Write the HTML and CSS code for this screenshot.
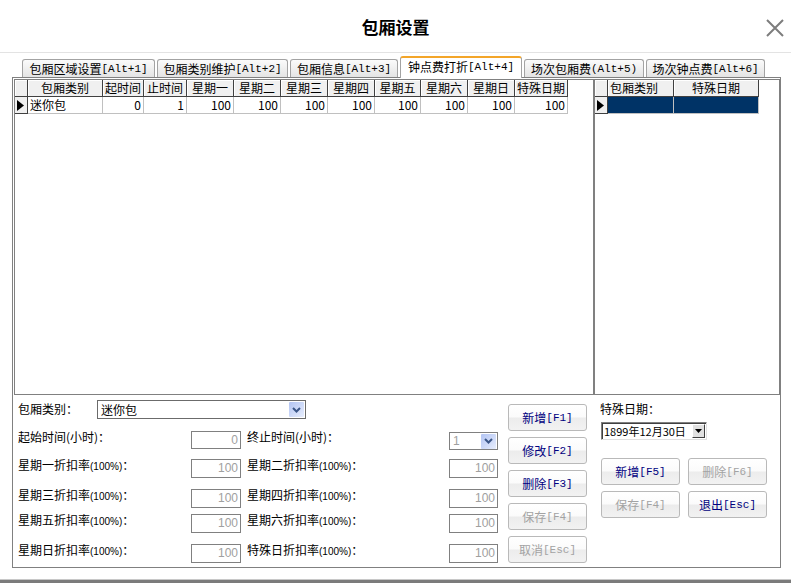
FILE: index.html
```html
<!DOCTYPE html>
<html lang="zh-CN">
<head>
<meta charset="utf-8">
<title>包厢设置</title>
<link rel="stylesheet" href="styles.css">
</head>
<body>
<div class="window">
  <header class="titlebar">
    <div></div>
    <h1 class="title">包厢设置</h1>
    <div class="close-wrap">
      <svg class="close" width="20" height="20" viewBox="0 0 20 20"><path d="M2 2L18 18M18 2L2 18" stroke="#7d7d7d" stroke-width="2" fill="none"/></svg>
    </div>
  </header>

  <nav class="tabs">
    <div class="tab t1">包厢区域设置<span class="mono">[Alt+1]</span></div>
    <div class="tab t2">包厢类别维护<span class="mono">[Alt+2]</span></div>
    <div class="tab t3">包厢信息<span class="mono">[Alt+3]</span></div>
    <div class="tab t4 active">钟点费打折<span class="mono">[Alt+4]</span></div>
    <div class="tab t5">场次包厢费<span class="mono">(Alt+5)</span></div>
    <div class="tab t6">场次钟点费<span class="mono">[Alt+6]</span></div>
  </nav>

  <section class="panel">
    <div class="grids">
      <div class="grid grid-main">
        <div class="row">
          <div class="cell hd ind"></div>
          <div class="cell hd w75">包厢类别</div>
          <div class="cell hd w41">起时间</div>
          <div class="cell hd w43">止时间</div>
          <div class="cell hd w47">星期一</div>
          <div class="cell hd w47">星期二</div>
          <div class="cell hd w47">星期三</div>
          <div class="cell hd w47">星期四</div>
          <div class="cell hd w46">星期五</div>
          <div class="cell hd w47">星期六</div>
          <div class="cell hd w47">星期日</div>
          <div class="cell hd w53">特殊日期</div>
        </div>
        <div class="row">
          <div class="cell ind-data"><svg width="7" height="11" viewBox="0 0 7 11"><path d="M0 0L7 5.5L0 11Z" fill="#000"/></svg></div>
          <div class="cell dt w75 left">迷你包</div>
          <div class="cell dt w41">0</div>
          <div class="cell dt w43">1</div>
          <div class="cell dt w47">100</div>
          <div class="cell dt w47">100</div>
          <div class="cell dt w47">100</div>
          <div class="cell dt w47">100</div>
          <div class="cell dt w46">100</div>
          <div class="cell dt w47">100</div>
          <div class="cell dt w47">100</div>
          <div class="cell dt w53">100</div>
        </div>
      </div>
      <div class="grid grid-side">
        <div class="row">
          <div class="cell hd ind"></div>
          <div class="cell hd w66 left">包厢类别</div>
          <div class="cell hd w85">特殊日期</div>
        </div>
        <div class="row">
          <div class="cell ind-data"><svg width="7" height="11" viewBox="0 0 7 11"><path d="M0 0L7 5.5L0 11Z" fill="#000"/></svg></div>
          <div class="cell sel w66"></div>
          <div class="cell sel w85"></div>
        </div>
      </div>
    </div>

    <div class="editor">
      <div class="form">
        <div class="frow r1">
          <div class="lbl lbl-type">包厢类别：</div>
          <div class="select select-type">
            <span class="sval">迷你包</span>
            <span class="dd"><svg width="9" height="6" viewBox="0 0 9 6"><path d="M1 1L4.5 4.5L8 1" stroke="#3b5688" stroke-width="2" fill="none"/></svg></span>
          </div>
        </div>
        <div class="frow r2">
          <div class="lbl c1">起始时间(小时)：</div>
          <div class="inp">0</div>
          <div class="lbl c3">终止时间(小时)：</div>
          <div class="select select-end">
            <span class="sval gray">1</span>
            <span class="dd"><svg width="9" height="6" viewBox="0 0 9 6"><path d="M1 1L4.5 4.5L8 1" stroke="#3b5688" stroke-width="2" fill="none"/></svg></span>
          </div>
        </div>
        <div class="frow r3">
          <div class="lbl c1">星期一折扣率<span class="pct">(100%)</span>：</div>
          <div class="inp">100</div>
          <div class="lbl c3">星期二折扣率<span class="pct">(100%)</span>：</div>
          <div class="inp inp2">100</div>
        </div>
        <div class="frow r4">
          <div class="lbl c1">星期三折扣率<span class="pct">(100%)</span>：</div>
          <div class="inp">100</div>
          <div class="lbl c3">星期四折扣率<span class="pct">(100%)</span>：</div>
          <div class="inp inp2">100</div>
        </div>
        <div class="frow r5">
          <div class="lbl c1">星期五折扣率<span class="pct">(100%)</span>：</div>
          <div class="inp">100</div>
          <div class="lbl c3">星期六折扣率<span class="pct">(100%)</span>：</div>
          <div class="inp inp2">100</div>
        </div>
        <div class="frow r6">
          <div class="lbl c1">星期日折扣率<span class="pct">(100%)</span>：</div>
          <div class="inp">100</div>
          <div class="lbl c3">特殊日折扣率<span class="pct">(100%)</span>：</div>
          <div class="inp inp2">100</div>
        </div>
      </div>

      <div class="btn-col">
        <div class="btn">新增<span class="mono">[F1]</span></div>
        <div class="btn">修改<span class="mono">[F2]</span></div>
        <div class="btn">删除<span class="mono">[F3]</span></div>
        <div class="btn disabled">保存<span class="mono">[F4]</span></div>
        <div class="btn disabled">取消<span class="mono">[Esc]</span></div>
      </div>

      <div class="side">
        <div class="lbl side-lbl">特殊日期：</div>
        <div class="date">
          <span class="date-text">1899年12月30日</span>
          <span class="date-dd"><svg width="7" height="4" viewBox="0 0 7 4"><path d="M0 0H7L3.5 4Z" fill="#000"/></svg></span>
        </div>
        <div class="side-btns">
          <div class="btn">新增<span class="mono">[F5]</span></div>
          <div class="btn disabled">删除<span class="mono">[F6]</span></div>
          <div class="btn disabled">保存<span class="mono">[F4]</span></div>
          <div class="btn">退出<span class="mono">[Esc]</span></div>
        </div>
      </div>
    </div>
  </section>

  <div class="statusbar"></div>
</div>
</body>
</html>
```

FILE: styles.css
```css
body {
  margin: 0;
  background: #fff;
  font-family: "Noto Sans CJK SC", "Liberation Sans", sans-serif;
  font-size: 12px;
  color: #000;
}

.window {
  width: 791px;
  height: 583px;
  overflow: hidden;
}

/* title bar */
.titlebar {
  height: 52px;
  border-bottom: 1px solid #e3e3e3;
  display: grid;
  grid-template-columns: 1fr auto 1fr;
  align-items: center;
}
.title {
  margin: 0;
  padding-top: 2px;
  font-size: 17px;
  font-weight: bold;
  line-height: 20px;
}
.close-wrap {
  display: flex;
  justify-content: flex-end;
  padding-right: 6px;
  padding-top: 3px;
}

.mono {
  font-family: "Liberation Mono", monospace;
  font-size: 11px;
}

/* tabs */
.tabs {
  display: flex;
  align-items: flex-end;
  gap: 2px;
  height: 25px;
  margin-bottom: -1px;
  padding-left: 22px;
  position: relative;
  z-index: 1;
}
.tab {
  box-sizing: border-box;
  height: 18px;
  margin-bottom: 1px;
  border: 1px solid #a3a3a3;
  border-bottom: none;
  border-radius: 3px 3px 0 0;
  background: linear-gradient(#fbfbfb, #e4e4e4);
  display: flex;
  align-items: center;
  justify-content: center;
  white-space: nowrap;
  line-height: 14px;
}
.tab.active {
  height: 22px;
  margin-bottom: 0;
  background: #fff;
  border-top: 2px solid #f3a529;
  padding-bottom: 2px;
}
.t1 { width: 133px; }
.t2 { width: 131px; }
.t3 { width: 108px; }
.t4 { width: 122px; }
.t5 { width: 120px; }
.t6 { width: 119px; }

/* panel */
.panel {
  box-sizing: border-box;
  margin-left: 12px;
  width: 769px;
  height: 491px;
  border: 1px solid #808080;
  padding: 1px 0 0 1px;
}

.grids {
  display: flex;
  height: 316px;
}
.grid {
  box-sizing: border-box;
  height: 316px;
  border: 1px solid #808080;
  background: #fff;
}
.grid-main { width: 580px; }
.grid-side { width: 186px; }

.row {
  display: flex;
  height: 17px;
}
.cell {
  box-sizing: border-box;
  height: 17px;
  line-height: 16px;
  padding: 0 2px;
  white-space: nowrap;
  overflow: hidden;
}
.hd {
  background: #f0f0f0;
  border-right: 1px solid #404040;
  border-bottom: 1px solid #404040;
  box-shadow: inset 1px 1px 0 #fff;
  text-align: center;
}
.dt {
  border-right: 1px solid #c0c0c0;
  border-bottom: 1px solid #c0c0c0;
  text-align: right;
}
.left { text-align: left; }
.ind { width: 13px; }
.ind-data {
  width: 13px;
  background: #f0f0f0;
  border-right: 1px solid #404040;
  border-bottom: 1px solid #404040;
  display: flex;
  align-items: center;
  padding: 0 0 0 2px;
}
.sel {
  background: #003366;
  border-right: 1px solid #c0c0c0;
  border-bottom: 1px solid #c0c0c0;
}
.w41 { width: 41px; }
.w43 { width: 43px; }
.w46 { width: 46px; }
.w47 { width: 47px; }
.w53 { width: 53px; }
.w66 { width: 66px; }
.w75 { width: 75px; }
.w85 { width: 85px; }

/* editor */
.editor {
  display: flex;
  height: 171px;
  padding-left: 4px;
}
.form {
  width: 480px;
  padding-top: 5px;
}
.frow {
  display: flex;
  align-items: flex-start;
  height: 19px;
}
.r2 { margin-top: 12px; height: 18px; }
.r3 { margin-top: 10px; }
.r4 { margin-top: 11px; }
.r5 { margin-top: 6px; }
.r6 { margin-top: 11px; }

.lbl {
  line-height: 14px;
  margin-top: -1px;
  white-space: nowrap;
}
.lbl-type { width: 79px; margin-top: 2px; }
.c1 { width: 173px; }
.c3 { width: 202px; margin-left: 6px; }
.pct {
  font-family: "Liberation Sans", sans-serif;
  font-size: 10px;
}

.inp {
  box-sizing: border-box;
  width: 50px;
  height: 19px;
  border: 1px solid #808080;
  background: #fff;
  color: #a0a0a0;
  text-align: right;
  padding-right: 2px;
  line-height: 17px;
  font-family: "Liberation Sans", sans-serif;
  font-size: 12px;
}
.r2 .inp { height: 18px; line-height: 16px; }
.inp2 { width: 49px; }

.select {
  box-sizing: border-box;
  display: flex;
  align-items: center;
  height: 19px;
  border: 1px solid #6b6b6b;
  background: #fff;
}
.select-type { width: 209px; }
.select-end { width: 49px; height: 18px; margin-top: 1px; border-color: #808080; }
.sval {
  flex: 1;
  padding-left: 3px;
  line-height: 16px;
}
.gray { color: #a0a0a0; font-family: "Liberation Sans", sans-serif; }
.dd {
  width: 15px;
  height: 15px;
  margin-right: 1px;
  border-radius: 1px;
  background: linear-gradient(135deg, #b2c4f3, #e7edfd);
  display: flex;
  align-items: center;
  justify-content: center;
}

/* buttons */
.btn-col {
  display: flex;
  flex-direction: column;
  gap: 6px;
  margin-left: 10px;
  padding-top: 9px;
}
.btn {
  box-sizing: border-box;
  width: 79px;
  height: 27px;
  border: 1px solid #b9b9b9;
  border-radius: 3px;
  background: linear-gradient(#ffffff 0%, #fbfbfb 48%, #ececec 52%, #f2f2f2 100%);
  color: #000080;
  display: flex;
  align-items: center;
  justify-content: center;
  white-space: nowrap;
}
.btn.disabled { color: #a3a3a3; }

/* side */
.side {
  margin-left: 13px;
  padding-top: 7px;
}
.side-lbl { margin-top: 0; }
.date {
  box-sizing: border-box;
  width: 106px;
  height: 18px;
  margin-top: 6px;
  margin-left: 1px;
  border: 1px solid;
  border-color: #808080 #e0e0e0 #e0e0e0 #808080;
  box-shadow: inset 1px 1px 0 #404040;
  background: #fff;
  display: flex;
  align-items: center;
}
.date-text {
  flex: 1;
  padding-left: 2px;
  font-size: 11px;
  line-height: 14px;
  white-space: nowrap;
}
.date-dd {
  box-sizing: border-box;
  width: 13px;
  height: 14px;
  margin-right: 1px;
  background: #e0e0e0;
  border: 1px solid;
  border-color: #fff #404040 #404040 #fff;
  display: flex;
  align-items: center;
  justify-content: center;
}
.side-btns {
  display: grid;
  grid-template-columns: 79px 79px;
  column-gap: 8px;
  row-gap: 6px;
  margin-top: 18px;
  margin-left: 1px;
}

.statusbar {
  margin-top: 11px;
  height: 4px;
  border-top: 1px solid #c8c8c8;
  background: #7b7b7b;
}
```
